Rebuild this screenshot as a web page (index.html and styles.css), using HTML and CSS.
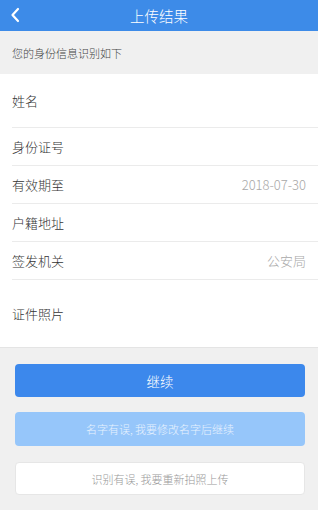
FILE: index.html
```html
<!DOCTYPE html>
<html lang="zh-CN">
<head>
    <meta charset="UTF-8">
    <meta name="viewport" content="width=device-width, initial-scale=1.0">
    <title>上传结果</title>
    <link rel="stylesheet" href="styles.css">
</head>
<body>

<div class="page">
    <!-- Header -->
    <div class="header">
        <svg class="back-icon" width="10" height="16" viewBox="0 0 10 16">
            <path d="M8 2 L2.5 8 L8 14" fill="none" stroke="#fff" stroke-width="2.2" stroke-linecap="round" stroke-linejoin="round"/>
        </svg>
        <div class="header-title">上传结果</div>
    </div>

    <div class="tip">您的身份信息识别如下</div>

    <!-- Info list -->
    <div class="info-list">
        <div class="info-row row-name"><span class="label">姓名</span></div>
        <div class="info-row"><span class="label">身份证号</span></div>
        <div class="info-row"><span class="label">有效期至</span><span class="value">2018-07-30</span></div>
        <div class="info-row"><span class="label">户籍地址</span></div>
        <div class="info-row"><span class="label">签发机关</span><span class="value">公安局</span></div>
        <div class="info-row row-photo"><span class="label">证件照片</span></div>
    </div>

    <!-- Buttons -->
    <div class="actions">
        <div class="btn btn-primary">继续</div>
        <div class="btn btn-light">名字有误, 我要修改名字后继续</div>
        <div class="btn btn-plain">识别有误, 我要重新拍照上传</div>
    </div>
</div>

</body>
</html>
```

FILE: styles.css
```css
body {
    margin: 0;
    font-family: "Noto Sans CJK SC", "Noto Sans", sans-serif;
    font-weight: 300;
    background-color: #f0f0f0;
}

.page {
    width: 318px;
    height: 510px;
    background-color: #f0f0f0;
}

.header {
    height: 31px;
    background-color: #3d8be8;
    display: flex;
    align-items: center;
    justify-content: center;
    position: relative;
}

.back-icon {
    position: absolute;
    left: 10px;
    top: 7px;
}

.header-title {
    color: white;
    font-size: 14.5px;
}

.tip {
    height: 43px;
    display: flex;
    align-items: center;
    padding-left: 12px;
    font-size: 11px;
    color: #444;
}

.info-list {
    background-color: white;
    padding-left: 12px;
    border-bottom: 1px solid #e4e4e4;
}

.info-row {
    height: 37px;
    display: flex;
    align-items: center;
    justify-content: space-between;
    padding-right: 12px;
    border-bottom: 1px solid #ebebeb;
}

.row-name {
    height: 53px;
}

.row-photo {
    height: 67px;
    border-bottom: none;
}

.label {
    font-size: 13px;
    color: #333;
}

.value {
    font-size: 13px;
    color: #a8a8a8;
}

.actions {
    padding: 16px 13px 0 15px;
}

.btn {
    height: 33px;
    border-radius: 4px;
    display: flex;
    align-items: center;
    justify-content: center;
    box-sizing: border-box;
}

.btn-primary {
    background-color: #3c88ec;
    color: white;
    font-size: 13.5px;
}

.btn-light {
    margin-top: 15px;
    background-color: #96c6fa;
    color: #e8f2fe;
    font-size: 11px;
    height: 34px;
}

.btn-plain {
    margin-top: 16px;
    background-color: white;
    border: 1px solid #e6e6e6;
    color: #999;
    font-size: 11px;
}
```
